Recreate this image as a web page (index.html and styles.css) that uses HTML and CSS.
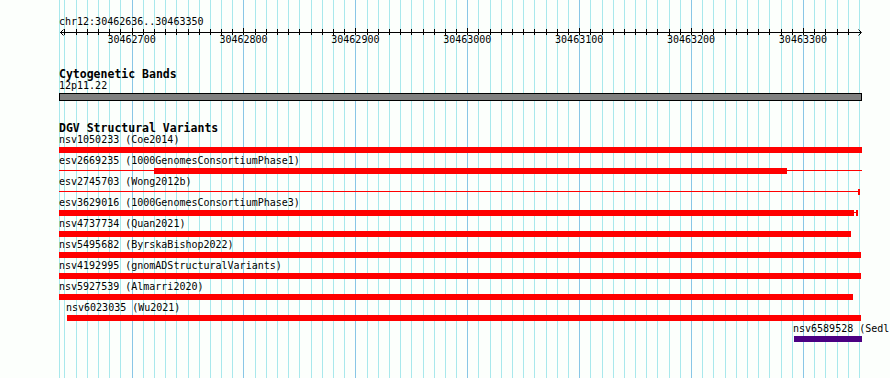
FILE: index.html
```html
<!DOCTYPE html>
<html lang="en">
<head>
    <meta charset="UTF-8">
    <meta name="viewport" content="width=device-width, initial-scale=1.0">
    <title>chr12:30462636..30463350</title>
    <link rel="stylesheet" href="styles.css">
</head>
<body>
    <div id="panel" class="panel">
        <svg id="grid" class="grid"></svg>

        <div class="ruler">
            <div class="name">chr12:30462636..30463350</div>
            <svg id="scale" class="scale" width="803" height="6"></svg>
            <div id="scaleLabels" class="scale-labels"></div>
        </div>

        <div class="track">
            <div class="track-title">Cytogenetic Bands</div>
            <div class="name">12p11.22</div>
            <div class="band"></div>
        </div>

        <div class="track track-dgv">
            <div class="track-title">DGV Structural Variants</div>
            <div class="feature">
                <div class="name">nsv1050233 (Coe2014)</div>
                <div class="glyph"><span class="bar" style="left:0;width:803px"></span></div>
            </div>
            <div class="feature">
                <div class="name">esv2669235 (1000GenomesConsortiumPhase1)</div>
                <div class="glyph"><span class="line" style="left:0;width:803px"></span><span class="bar" style="left:95px;width:633px"></span></div>
            </div>
            <div class="feature">
                <div class="name">esv2745703 (Wong2012b)</div>
                <div class="glyph"><span class="line" style="left:0;width:799px"></span><span class="bar" style="left:799px;width:2px"></span></div>
            </div>
            <div class="feature">
                <div class="name">esv3629016 (1000GenomesConsortiumPhase3)</div>
                <div class="glyph"><span class="bar" style="left:0;width:795px"></span><span class="line" style="left:795px;width:2px"></span><span class="bar" style="left:797px;width:2px"></span></div>
            </div>
            <div class="feature">
                <div class="name">nsv4737734 (Quan2021)</div>
                <div class="glyph"><span class="bar" style="left:0;width:792px"></span></div>
            </div>
            <div class="feature">
                <div class="name">nsv5495682 (ByrskaBishop2022)</div>
                <div class="glyph"><span class="bar" style="left:0;width:802px"></span></div>
            </div>
            <div class="feature">
                <div class="name">nsv4192995 (gnomADStructuralVariants)</div>
                <div class="glyph"><span class="bar" style="left:0;width:802px"></span></div>
            </div>
            <div class="feature">
                <div class="name">nsv5927539 (Almarri2020)</div>
                <div class="glyph"><span class="bar" style="left:0;width:794px"></span></div>
            </div>
            <div class="feature">
                <div class="name" style="margin-left:7px">nsv6023035 (Wu2021)</div>
                <div class="glyph"><span class="bar" style="left:8px;width:794px"></span></div>
            </div>
            <div class="feature">
                <div class="name" style="margin-left:734px">nsv6589528 (Sedl</div>
                <div class="glyph"><span class="bar indigo" style="left:735px;width:68px"></span></div>
            </div>
        </div>
    </div>

    <script type="text/javascript">
        var start = 30462636;
        var end = 30463350;
        var scale = 800 / 715;
        var ns = "http://www.w3.org/2000/svg";

        function xOf(bp) {
            return 1 + (bp - start) * scale;
        }
        function addRect(svg, x, y, w, h, color) {
            var r = document.createElementNS(ns, "rect");
            r.setAttribute("x", x);
            r.setAttribute("y", y);
            r.setAttribute("width", w);
            r.setAttribute("height", h);
            r.setAttribute("fill", color);
            svg.appendChild(r);
        }

        var grid = document.getElementById("grid");
        var ruler = document.getElementById("scale");
        var labels = document.getElementById("scaleLabels");

        // edges of the view
        addRect(grid, 0, 0, 1, "100%", "#a8e8ec");
        addRect(grid, 800, 0, 1, "100%", "#a8e8ec");

        for (var bp = 30462640; bp < end; bp += 10) {
            var x = Math.round(xOf(bp));
            var major = bp % 100 == 0;
            addRect(grid, x, 0, 1, "100%", major ? "#88c6e6" : "#a8e8ec");
            addRect(ruler, x, major ? 0 : 1, 1, major ? 7 : 6, "#000");
            if (major) {
                var s = document.createElement("span");
                s.style.left = xOf(bp) + "px";
                s.innerHTML = bp;
                labels.appendChild(s);
            }
        }

        addRect(ruler, 1, 4, 801, 1, "#000");
        var arrows = document.createElementNS(ns, "path");
        arrows.setAttribute("d", "M4.5 1.5 L1.5 4.5 L4.5 7.5 M799.5 1.5 L802.5 4.5 L799.5 7.5");
        arrows.setAttribute("fill", "none");
        arrows.setAttribute("stroke", "#000");
        ruler.appendChild(arrows);
    </script>
</body>
</html>
```

FILE: styles.css
```css
html, body {
    margin: 0;
    height: 100%;
    overflow: hidden;
    background-color: #fcfffc;
}
body {
    font-family: "DejaVu Sans Mono", "Liberation Mono", monospace;
    font-size: 10px;
    line-height: 12px;
    color: #000;
}
.panel {
    position: relative;
    width: 803px;
    min-height: 100%;
    margin-left: 59px;
    padding-top: 16px;
    box-sizing: border-box;
}
.grid {
    position: absolute;
    top: 0;
    left: 0;
    width: 803px;
    height: 100%;
}
.ruler, .track {
    position: relative;
}
.name {
    height: 12px;
    white-space: nowrap;
}
.scale {
    display: block;
    overflow: visible;
}
.scale-labels {
    position: relative;
    height: 12px;
}
.scale-labels span {
    position: absolute;
    top: 0;
    transform: translateX(-50%);
}
.track {
    margin-top: 22px;
}
.track-dgv {
    margin-top: 21px;
}
.track-title {
    height: 12px;
    font-size: 11.5px;
    font-weight: bold;
}
.band {
    height: 8px;
    margin-top: 1px;
    box-sizing: border-box;
    border: 1px solid #000;
    background-color: #808080;
}
.feature {
    padding-bottom: 2px;
}
.glyph {
    position: relative;
    height: 6px;
    margin-top: 1px;
}
.bar {
    position: absolute;
    top: 0;
    height: 6px;
    background-color: #f00;
}
.line {
    position: absolute;
    top: 2px;
    height: 1px;
    background-color: #f00;
}
.bar.indigo {
    background-color: #4b0082;
}
```
